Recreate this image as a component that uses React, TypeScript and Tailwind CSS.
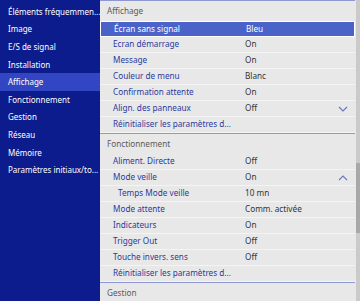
import React from 'react';

type Row = { label: string; value?: string; indent?: boolean; selected?: boolean; chevron?: 'up' | 'down' };

const menu = [
  'Éléments fréquemmen...',
  'Image',
  'E/S de signal',
  'Installation',
  'Affichage',
  'Fonctionnement',
  'Gestion',
  'Réseau',
  'Mémoire',
  'Paramètres initiaux/to...',
];

const affichage: Row[] = [
  { label: 'Écran sans signal', value: 'Bleu', selected: true },
  { label: 'Ecran démarrage', value: 'On' },
  { label: 'Message', value: 'On' },
  { label: 'Couleur de menu', value: 'Blanc' },
  { label: 'Confirmation attente', value: 'On' },
  { label: 'Align. des panneaux', value: 'Off', chevron: 'down' },
  { label: 'Réinitialiser les paramètres d...' },
];

const fonctionnement: Row[] = [
  { label: 'Aliment. Directe', value: 'Off' },
  { label: 'Mode veille', value: 'On', chevron: 'up' },
  { label: 'Temps Mode veille', value: '10 mn', indent: true },
  { label: 'Mode attente', value: 'Comm. activée' },
  { label: 'Indicateurs', value: 'On' },
  { label: 'Trigger Out', value: 'Off' },
  { label: 'Touche invers. sens', value: 'Off' },
  { label: 'Réinitialiser les paramètres d...' },
];

const Chevron = ({ dir }: { dir: 'up' | 'down' }) => (
  <svg width="10" height="6" viewBox="0 0 10 6" className="mr-[7px]">
    <path
      d={dir === 'down' ? 'M1 1 L5 5 L9 1' : 'M1 5 L5 1 L9 5'}
      fill="none"
      stroke="#6a74c4"
      strokeWidth="1.1"
    />
  </svg>
);

const SettingRow = ({ row }: { row: Row }) => (
  <div
    className={
      row.selected
        ? 'flex h-[16px] items-center border border-white bg-[#4b63c9] text-white'
        : 'flex h-[16px] items-center border-b border-[#f4f4f4] text-[#2b3a9c]'
    }
  >
    <div className={`w-[145px] shrink-0 whitespace-nowrap pr-2 ${row.indent ? 'pl-[18px]' : 'pl-[13px]'}`}>{row.label}</div>
    <div className={`flex-1 whitespace-nowrap ${row.selected ? 'text-white' : 'text-[#333]'}`}>{row.value}</div>
    {row.chevron && <Chevron dir={row.chevron} />}
  </div>
);

const SectionHeader = ({ title }: { title: string }) => (
  <div className="flex h-[21px] items-center border-t border-[#8f97d3] pl-[7px] text-[#5a5a5a]">{title}</div>
);

export default function App() {
  return (
    <div
      className="flex h-[301px] w-[360px] overflow-hidden text-[8.2px] leading-normal"
      style={{ fontFamily: '"Noto Sans", "Open Sans", sans-serif' }}
    >
      <nav className="flex w-[100px] shrink-0 flex-col bg-[#0c1c8c] pt-[3px] text-[8px] text-white">
        {menu.map((m) => (
          <div
            key={m}
            className={`flex h-[17.6px] items-center whitespace-nowrap pl-[8px] ${m === 'Affichage' ? 'bg-[#3246c4]' : ''}`}
          >
            {m}
          </div>
        ))}
      </nav>

      <main className="flex flex-1 bg-[#e8e8e8]">
        <div className="flex-1">
          <SectionHeader title="Affichage" />
          {affichage.map((r) => (
            <SettingRow key={r.label} row={r} />
          ))}
          <SectionHeader title="Fonctionnement" />
          {fonctionnement.map((r) => (
            <SettingRow key={r.label} row={r} />
          ))}
          <SectionHeader title="Gestion" />
        </div>
        <div className="relative ml-px w-[4px] bg-[#cacaca]">
          <div className="absolute left-0 top-[163px] h-[70px] w-full bg-[#a8a8a8]" />
        </div>
      </main>
    </div>
  );
}
